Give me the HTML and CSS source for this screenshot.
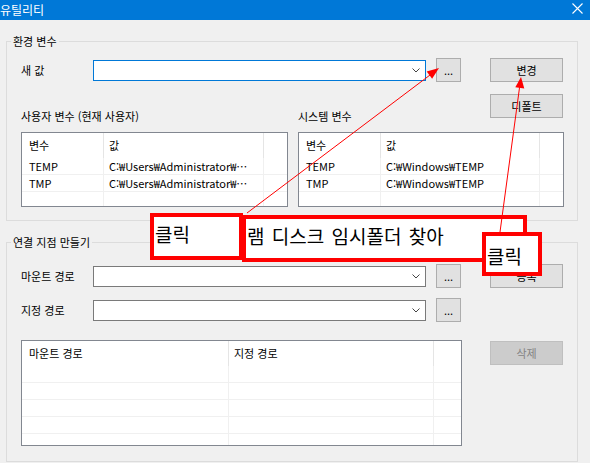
FILE: index.html
```html
<!DOCTYPE html>
<html lang="ko">
<head>
<meta charset="utf-8">
<title>유틸리티</title>
<link rel="stylesheet" href="styles.css">
</head>
<body>
<div class="window">
  <div class="titlebar">
    <span class="title">유틸리티</span>
    <svg class="close" width="11" height="11" viewBox="0 0 11 11"><path d="M0.5 0.5 L10.5 10.5 M10.5 0.5 L0.5 10.5" stroke="#fff" stroke-width="1.1" fill="none"/></svg>
  </div>
  <div class="client">
    <section class="group g1">
      <div class="legend">환경 변수</div>
      <div class="g1-body">
        <div class="row1">
          <span class="lbl">새 값</span>
          <div class="combo focus"><svg class="chev" width="8" height="5" viewBox="0 0 8 5"><path d="M0.5 0.5 L4 4 L7.5 0.5" stroke="#444" fill="none"/></svg></div>
          <button class="btn dots">...</button>
          <button class="btn wide">변경</button>
        </div>
        <div class="row2">
          <div class="cell-left"><span class="lbl">사용자 변수 (현재 사용자)</span></div>
          <div class="cell-right"><span class="lbl">시스템 변수</span><button class="btn wide">디폴트</button></div>
        </div>
        <div class="tables">
          <div class="list list-user">
            <div class="lhead"><span>변수</span><span>값</span><span class="fill"></span></div>
            <div class="lrow"><span>TEMP</span><span>C:₩Users₩Administrator₩…</span><span class="fill"></span></div>
            <div class="lrow"><span>TMP</span><span>C:₩Users₩Administrator₩…</span><span class="fill"></span></div>
            <div class="lrow"><span></span><span></span><span class="fill"></span></div>
          </div>
          <div class="list list-sys">
            <div class="lhead"><span>변수</span><span>값</span><span class="fill"></span></div>
            <div class="lrow"><span>TEMP</span><span>C:₩Windows₩TEMP</span><span class="fill"></span></div>
            <div class="lrow"><span>TMP</span><span>C:₩Windows₩TEMP</span><span class="fill"></span></div>
            <div class="lrow"><span></span><span></span><span class="fill"></span></div>
          </div>
        </div>
      </div>
    </section>

    <section class="group g2">
      <div class="legend">연결 지점 만들기</div>
      <div class="g2-body">
        <div class="g2-left">
          <div class="prow">
            <span class="lbl">마운트 경로</span>
            <div class="combo"><svg class="chev" width="8" height="5" viewBox="0 0 8 5"><path d="M0.5 0.5 L4 4 L7.5 0.5" stroke="#444" fill="none"/></svg></div>
            <button class="btn dots">...</button>
          </div>
          <div class="prow">
            <span class="lbl">지정 경로</span>
            <div class="combo"><svg class="chev" width="8" height="5" viewBox="0 0 8 5"><path d="M0.5 0.5 L4 4 L7.5 0.5" stroke="#444" fill="none"/></svg></div>
            <button class="btn dots">...</button>
          </div>
          <div class="list list-links">
            <div class="lhead"><span>마운트 경로</span><span>지정 경로</span><span class="fill"></span></div>
            <div class="lrow"><span></span><span></span><span class="fill"></span></div>
            <div class="lrow"><span></span><span></span><span class="fill"></span></div>
            <div class="lrow"><span></span><span></span><span class="fill"></span></div>
            <div class="lrow"><span></span><span></span><span class="fill"></span></div>
            <div class="lrow"><span></span><span></span><span class="fill"></span></div>
          </div>
        </div>
        <div class="g2-right">
          <button class="btn wide">등록</button>
          <button class="btn wide disabled">삭제</button>
        </div>
      </div>
    </section>
  </div>

  <div class="note note-click1">클릭</div>
  <div class="note note-ram">램 디스크 임시폴더 찾아</div>
  <div class="note note-click2">클릭</div>

  <svg class="arrows" width="590" height="463" viewBox="0 0 590 463">
    <line x1="247" y1="213" x2="432" y2="73.5" stroke="#ff0000" stroke-width="1"/>
    <polygon points="439,68 432.1,78.8 426.7,71.6" fill="#ff0000"/>
    <line x1="500" y1="232" x2="519.6" y2="87" stroke="#ff0000" stroke-width="1"/>
    <polygon points="521,77 524.3,88.5 515.3,87.3" fill="#ff0000"/>
  </svg>
</div>
</body>
</html>
```

FILE: styles.css
```css
* { box-sizing: border-box; }

html, body {
  margin: 0;
  padding: 0;
  background: #f0f0f0;
}

body {
  font-family: "Noto Sans CJK KR", "Noto Sans", sans-serif;
  font-size: 11px;
  color: #000;
}

.window {
  position: relative;
  width: 590px;
  height: 463px;
  overflow: hidden;
  background: #f0f0f0;
}

/* title bar */
.titlebar {
  height: 20px;
  background: #0078d7;
  display: flex;
  align-items: center;
  justify-content: space-between;
  color: #fff;
}
.title {
  font-size: 12px;
  line-height: 20px;
  margin-left: 0;
}
.close {
  margin-right: 7px;
  margin-top: -3px;
}

/* client area */
.client {
  padding-left: 6px;
}

.group {
  width: 572px;
  border: 1px solid #dcdcdc;
}
.g1 {
  margin-top: 21px;
  height: 180px;
}
.g2 {
  margin-top: 21px;
  height: 220px;
}

.legend {
  width: fit-content;
  margin: -8px 0 0 4px;
  padding: 0 2px;
  line-height: 14px;
  background: #f0f0f0;
}

.lbl {
  white-space: nowrap;
  line-height: 16px;
}

/* group 1 */
.g1-body {
  padding: 10px 13px 0 14px;
}
.row1 {
  display: flex;
  align-items: flex-start;
  height: 24px;
}
.row1 .lbl {
  width: 72px;
  margin-top: 4px;
}
.row1 .combo {
  margin-top: 2px;
}

.combo {
  width: 333px;
  height: 21px;
  background: #fff;
  border: 1px solid #7a7a7a;
  display: flex;
  align-items: center;
  justify-content: flex-end;
  padding-right: 5px;
}
.combo.focus {
  border-color: #0078d7;
}
.chev {
  display: block;
}

.btn {
  font-family: inherit;
  font-size: 11px;
  color: #000;
  height: 24px;
  padding: 0;
  border: 1px solid #adadad;
  background: #e1e1e1;
  line-height: 20px;
}
.btn.dots {
  width: 25px;
  margin-left: 10px;
  line-height: 18px;
}
.btn.wide {
  width: 73px;
}
.row1 .btn.wide {
  margin-left: 29px;
}
.btn.disabled {
  background: #cccccc;
  border-color: #bfbfbf;
  color: #838383;
}

.row2 {
  margin-top: 12px;
  height: 38px;
  display: grid;
  grid-template-columns: 267px 266px;
  column-gap: 10px;
}
.cell-left {
  display: flex;
  align-items: flex-end;
  padding-bottom: 8px;
}
.cell-right {
  display: flex;
  justify-content: space-between;
}
.cell-right .lbl {
  align-self: flex-end;
  margin-bottom: 8px;
}
.cell-right .btn {
  margin-right: 1px;
}

.tables {
  display: grid;
  grid-template-columns: 267px 266px;
  column-gap: 10px;
}

/* list views */
.list {
  background: #fff;
  border: 1px solid #828790;
  overflow: hidden;
}
.list-user, .list-sys {
  height: 75px;
}
.lhead, .lrow {
  display: grid;
}
.list-user .lhead, .list-user .lrow { grid-template-columns: 82px 160px 1fr; }
.list-sys .lhead, .list-sys .lrow { grid-template-columns: 82px 159px 1fr; }
.list-links .lhead, .list-links .lrow { grid-template-columns: 207px 205px 1fr; }

.lhead {
  height: 25px;
}
.lhead span {
  line-height: 25px;
  padding-left: 5px;
  border-right: 1px solid #e5e5e5;
  white-space: nowrap;
}
.lrow {
  height: 17px;
  border-bottom: 1px solid #f0f0f0;
}
.lrow span {
  line-height: 16px;
  padding-left: 5px;
  border-right: 1px solid #f0f0f0;
  white-space: nowrap;
  overflow: hidden;
}
.lhead span:first-child, .lrow span:first-child {
  padding-left: 7px;
}
.lhead span.fill, .lrow span.fill {
  border-right: none;
}

/* group 2 */
.g2-body {
  padding: 15px 13px 0 14px;
  display: grid;
  grid-template-columns: 441px 73px;
  column-gap: 28px;
}
.g2-left {
  display: flex;
  flex-direction: column;
  gap: 10px;
}
.prow {
  display: flex;
  align-items: center;
  height: 24px;
}
.prow .lbl {
  width: 72px;
}
.list-links {
  margin-top: 8px;
  height: 106px;
}
.g2-right {
  display: flex;
  flex-direction: column;
  gap: 53px;
}

/* annotations */
.note {
  position: absolute;
  background: #fff;
  border: 4px solid #ff0000;
  font-size: 19px;
  line-height: 24px;
  padding: 5px 0 0 1px;
  white-space: nowrap;
}
.note-click1 {
  left: 150px;
  top: 213px;
  width: 93px;
  height: 47px;
}
.note-ram {
  left: 242px;
  top: 215px;
  width: 285px;
  height: 47px;
  word-spacing: 2px;
}
.note-click2 {
  left: 482px;
  top: 232px;
  width: 60px;
  height: 44px;
  padding-top: 8px;
}

.arrows {
  position: absolute;
  left: 0;
  top: 0;
  pointer-events: none;
}
```
